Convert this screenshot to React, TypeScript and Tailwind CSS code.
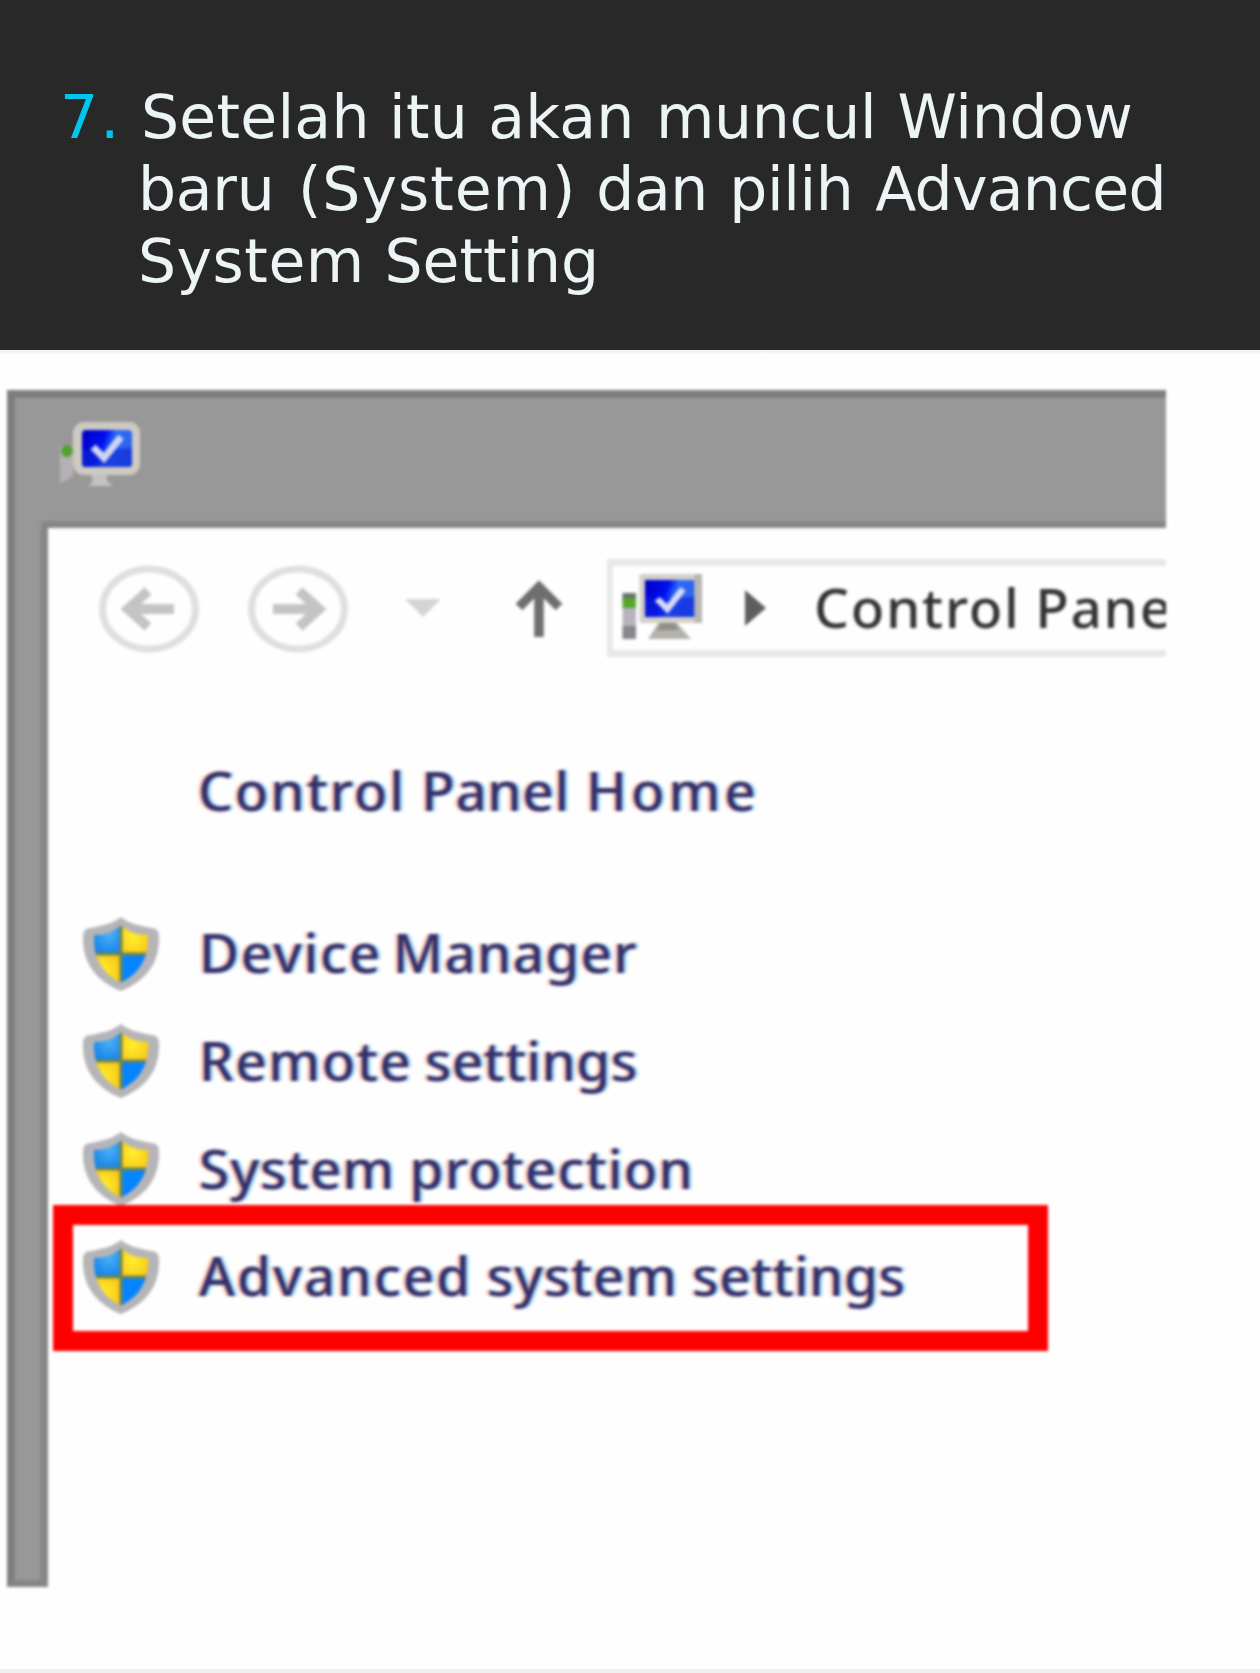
import React from "react";

function ScreenGradient({ id }: { id: string }) {
  return (
    <defs>
      <linearGradient id={id} x1="0" y1="0.2" x2="1" y2="0.5">
        <stop offset="0" stopColor="#0000c8" />
        <stop offset="0.42" stopColor="#0010f0" />
        <stop offset="0.6" stopColor="#2f6cf6" />
        <stop offset="1" stopColor="#2a62f0" />
      </linearGradient>
    </defs>
  );
}

function TitleIcon() {
  return (
    <svg width="84" height="74" viewBox="0 0 84 74" className="ml-[50px] mt-[20px] shrink-0">
      <ScreenGradient id="titleScreen" />
      <path d="M3 28 h13 v30 l-13 8 z" fill="#b4b0b6" />
      <circle cx="10" cy="33" r="6" fill="#55a030" />
      <path d="M34 56 h16 v7 l6 5 h-24 l4 -6 z" fill="#c2c2c2" />
      <rect x="16" y="4" width="67" height="53" rx="11" fill="#cdcac2" />
      <rect x="25" y="12" width="50" height="37" rx="4" fill="url(#titleScreen)" />
      <path d="M25 32 l50 -2 v16 q0 3 -3 3 h-44 q-3 0 -3 -3z" fill="#0b25cf" opacity="0.6" />
      <path d="M36 29 l11 11 l17 -21" fill="none" stroke="#d0d4f2" strokeWidth="7" />
    </svg>
  );
}

function AddressIcon() {
  return (
    <svg width="94" height="72" viewBox="0 0 84 72" preserveAspectRatio="none" className="-mt-[3px] ml-[4px] shrink-0">
      <ScreenGradient id="addressScreen" />
      <rect x="5" y="22" width="12" height="46" fill="#b9b3bd" />
      <rect x="5" y="22" width="12" height="9" fill="#6a6f66" />
      <rect x="5" y="27" width="12" height="10" fill="#55a82c" />
      <rect x="5" y="55" width="12" height="13" fill="#8a878c" />
      <path d="M38 50 h14 l14 18 h-38 z" fill="#b3b1ab" />
      <path d="M40 50 h11 l4 9 h-19 z" fill="#8e8d88" />
      <rect x="20" y="3" width="56" height="49" rx="2" fill="#d3d0c7" />
      <path d="M69 3 h7 v49 h-7 z" fill="#b9b7b3" />
      <rect x="25" y="9" width="44" height="37" fill="url(#addressScreen)" />
      <path d="M25 28 l44 -2 v20 h-44z" fill="#0b20d8" opacity="0.6" />
      <path d="M36 28 l9 10 l14 -20" fill="none" stroke="#d8dcf6" strokeWidth="6" />
    </svg>
  );
}

function Shield() {
  return (
    <svg width="80" height="76" viewBox="0 0 80 80" preserveAspectRatio="none" className="ml-[33px] mt-[4px] shrink-0">
      <defs>
        <clipPath id="shieldFace">
          <path d="M40 10 C48 17 56 20 67 20 C68 42 60 60 40 70 C20 60 12 42 13 20 C24 20 32 17 40 10Z" />
        </clipPath>
        <radialGradient id="shieldBlue" cx="0.6" cy="0.4" r="0.7">
          <stop offset="0" stopColor="#4bb0f7" />
          <stop offset="1" stopColor="#0f7fe6" />
        </radialGradient>
        <radialGradient id="shieldYellow" cx="0.4" cy="0.5" r="0.7">
          <stop offset="0" stopColor="#fff02c" />
          <stop offset="1" stopColor="#f8c014" />
        </radialGradient>
      </defs>
      <path d="M40 1 C49 9 60 10 72 13 Q78 14 78 21 C79 48 66 68 40 79 C14 68 1 48 2 21 Q2 14 8 13 C20 10 31 9 40 1Z" fill="#b5b5b8" />
      <g clipPath="url(#shieldFace)">
        <rect x="10" y="5" width="30" height="35" fill="url(#shieldBlue)" />
        <rect x="40" y="5" width="30" height="35" fill="url(#shieldYellow)" />
        <rect x="10" y="40" width="30" height="35" fill="url(#shieldYellow)" />
        <rect x="40" y="40" width="30" height="35" fill="#0584ff" />
        <path d="M40 5 v70 M10 40 h60" stroke="#6d8350" strokeWidth="3" />
      </g>
    </svg>
  );
}

function RoundArrow({ flip }: { flip?: boolean }) {
  return (
    <svg width="104" height="90" viewBox="0 0 104 90" className={flip ? "shrink-0 -scale-x-100" : "shrink-0"}>
      <ellipse cx="52" cy="45" rx="46.5" ry="40" fill="none" stroke="#dfdfdf" strokeWidth="7" />
      <path d="M77 45 H32 M51 27 L31 45 L51 63" fill="none" stroke="#c4c4c4" strokeWidth="10" />
    </svg>
  );
}

type Word = [text: string, spacing: string];

function Words({ words }: { words: Word[] }) {
  return (
    <>
      {words.map(([text, spacing], i) => (
        <React.Fragment key={i}>
          {i > 0 && " "}
          <span className={spacing}>{text}</span>
        </React.Fragment>
      ))}
    </>
  );
}

const heading: Word[][] = [
  [
    ["Setelah", "ml-[3px]"],
    ["itu", ""],
    ["akan", "ml-[1px]"],
    ["muncul", "ml-[2px] tracking-[-0.3px]"],
    ["Window", "ml-[2px] tracking-[-0.25px]"],
  ],
  [
    ["baru", "tracking-[-0.25px]"],
    ["(System)", "ml-[4px] tracking-[1px]"],
    ["dan", "ml-[0.5px] tracking-[-0.45px]"],
    ["pilih", "ml-[2px] tracking-[-0.35px]"],
    ["Advanced", "ml-[2.5px] tracking-[-0.75px]"],
  ],
  [
    ["System", "tracking-[0.5px]"],
    ["Setting", "ml-[0.5px] tracking-[-0.05px]"],
  ],
];

const linkText =
  "whitespace-nowrap text-[55px] font-medium text-[#34306c] [text-shadow:-3px_0_1px_#ff8a5a80,3px_0_1px_#40b8ff80]";

const links: { words: Word[]; marked?: boolean }[] = [
  { words: [["Device", "tracking-[1.65px]"], ["Manager", "-ml-[3.5px] tracking-[1.15px]"]] },
  { words: [["Remote", "tracking-[1.45px]"], ["settings", "-ml-[2px] tracking-[0.3px]"]] },
  { words: [["System", "tracking-[0.9px]"], ["protection", "tracking-[1.1px]"]] },
  {
    words: [["Advanced", "tracking-[1.95px]"], ["system", "tracking-[0.65px]"], ["settings", "tracking-[0.35px]"]],
    marked: true,
  },
];

export default function App() {
  return (
    <div className="flex h-[1673px] w-[1260px] flex-col overflow-hidden bg-[#fefefe]">
      <header className="flex h-[350px] shrink-0 bg-[#282828] pt-[81px] text-[60px] leading-[72px] text-[#ecf4f6] font-['DejaVu_Sans',sans-serif]">
        <span className="w-[138px] shrink-0 pl-[60px] tracking-[2px] text-[#00c6ee]">7.</span>
        <h1 className="whitespace-nowrap tracking-[0.25px]">
          {heading.map((line, i) => (
            <span key={i} className="block">
              <Words words={line} />
            </span>
          ))}
        </h1>
      </header>
      <div className="h-1 shrink-0 bg-gradient-to-b from-[#f0eeee] to-[#fbfbfb]" />

      <main className="min-h-0 flex-1 pl-[7px] pt-[36px] font-['Noto_Sans',sans-serif]">
        <div className="flex h-[1197px] w-[1159px] flex-col overflow-hidden blur-[1.8px]">
          <div className="flex h-[138px] shrink-0 border-l-[8px] border-t-[8px] border-[#7e7e7e] bg-[#989898]">
            <div className="flex flex-1 flex-col">
              <div className="-ml-[8px] flex-1">
                <TitleIcon />
              </div>
              <div className="ml-[26px] h-[7px] bg-[#868686]" />
            </div>
          </div>
          <div className="flex min-h-0 flex-1">
            <div className="w-[41px] shrink-0 border-b-[7px] border-l-[8px] border-r-[8px] border-l-[#7e7e7e] border-r-[#868686] border-b-[#868686] bg-[#989898]" />
            <div className="flex-1 bg-[#fefefe]">
              <div className="flex h-[162px] items-center pl-[49px]">
                <RoundArrow />
                <div className="w-[45px]" />
                <RoundArrow flip />
                <svg width="44" height="24" viewBox="0 0 44 24" className="-mt-[3px] ml-[51px] shrink-0">
                  <path d="M4 3 H40 L22 21Z" fill="#d4d4d4" />
                </svg>
                <svg width="52" height="64" viewBox="0 0 52 64" className="ml-[68px] shrink-0">
                  <path d="M26 60 V10 M6 30 L26 10 L46 30" fill="none" stroke="#6e6e6e" strokeWidth="9.5" />
                </svg>
                <div className="-mt-[2px] ml-[42px] flex h-[98px] flex-1 items-center overflow-hidden border-y-[7px] border-l-[6px] border-[#e8e8e8]">
                  <AddressIcon />
                  <svg width="24" height="38" viewBox="0 0 24 38" className="ml-[32px] shrink-0">
                    <path d="M2 1 L23 19 L2 37Z" fill="#5e5e5e" />
                  </svg>
                  <span className="-mt-[2px] ml-[47px] whitespace-nowrap text-[55px] font-medium leading-[70px] tracking-[1.7px] text-[#333333]">
                    <Words words={[["Control", ""], ["Pane", "-ml-[1.5px]"]]} />
                  </span>
                </div>
              </div>

              <div className={`${linkText} ml-[150px] mt-[46px] h-[108px] leading-[108px]`}>
                <Words
                  words={[
                    ["Control", "tracking-[1.9px]"],
                    ["Panel", "ml-[1px] tracking-[0.5px]"],
                    ["Home", "ml-[2px] tracking-[3.8px]"],
                  ]}
                />
              </div>
              <ul className="mt-[54px]">
                {links.map((link, i) => (
                  <li key={i} className="relative flex h-[107.67px] items-center">
                    <Shield />
                    <span className={`${linkText} ml-[38px] leading-[107px]`}>
                      <Words words={link.words} />
                    </span>
                    {link.marked && (
                      <div className="absolute -top-[16px] left-[5px] h-[146px] w-[995px] border-[20px] border-[#ff0000]" />
                    )}
                  </li>
                ))}
              </ul>
            </div>
          </div>
        </div>
      </main>
      <div className="h-1 shrink-0 bg-[#f0f0f0]" />
    </div>
  );
}
